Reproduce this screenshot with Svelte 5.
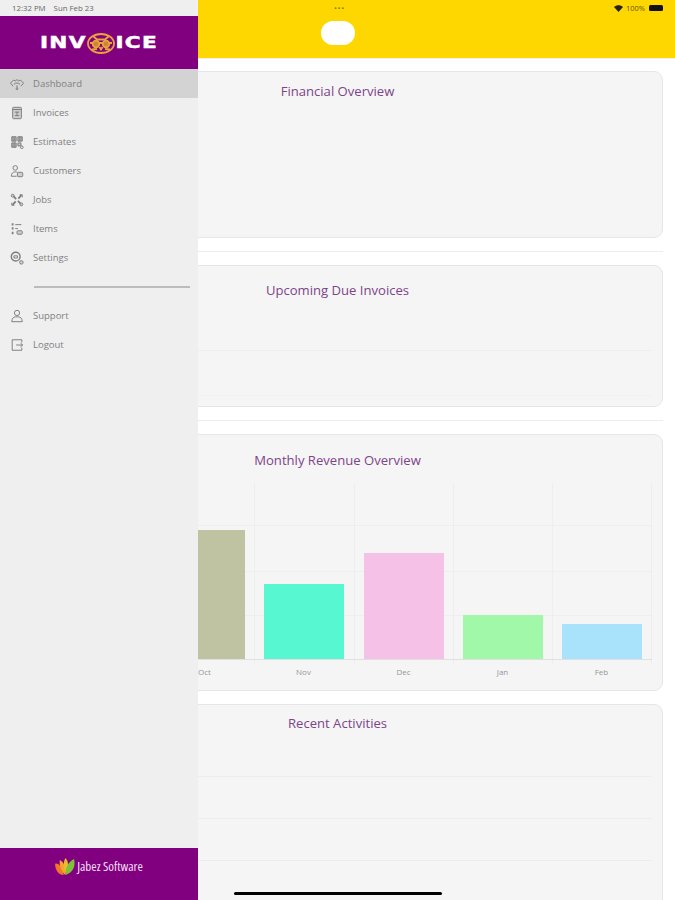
<script lang="ts">
  const navTop = [
    { label: "Dashboard", icon: "dashboard", active: true },
    { label: "Invoices", icon: "invoices" },
    { label: "Estimates", icon: "estimates" },
    { label: "Customers", icon: "customers" },
    { label: "Jobs", icon: "jobs" },
    { label: "Items", icon: "items" },
    { label: "Settings", icon: "settings" },
  ];
  const navBottom = [
    { label: "Support", icon: "support" },
    { label: "Logout", icon: "logout" },
  ];

  // page coordinates, the svg viewBox starts at the chart's top left
  const bars = [
    { month: "Oct", x: 165, top: 530, color: "#bfc3a1" },
    { month: "Nov", x: 264, top: 584, color: "#57f7d2" },
    { month: "Dec", x: 364, top: 553, color: "#f6c1e6" },
    { month: "Jan", x: 463, top: 615, color: "#a2f8a9" },
    { month: "Feb", x: 562, top: 624, color: "#a9e3fb" },
  ];
  const baseline = 659;
  const gridX = [155, 254, 354, 453, 552, 651];
  const gridY = [525, 571, 615];
</script>

{#snippet navIcon(name: string)}
  <svg class="nav-icon" viewBox="0 0 16 16" aria-hidden="true">
    {#if name === "dashboard"}
      <path d="M.5 7 4 3.500l2 1 2-1.500 2 1.500 2-1 3.500 3.500-3 3.500M3.500 10.500.5 7" />
      <path d="M4.500 8.500a4.500 4.500 0 0 1 7 0M8 9.500v3" />
      <circle cx="8" cy="13.500" r="1" />
    {:else if name === "invoices"}
      <rect x="3" y="1.500" width="10" height="13" rx="1" class="tint" />
      <path d="M3 4h10M8 6.500v5M5.500 7h5M5.500 11h5" />
    {:else if name === "estimates"}
      <path class="dense" d="M2 2h5v5H2zM9 2h5v5H9zM2 9h5v5H2zM9 9h3.500v3.500H9z" />
      <path d="M3.500 2v5M5.500 2v5M10.500 2v5M12.500 2v5M3.500 9v5M5.500 9v5" />
      <circle cx="13.500" cy="14" r="1.500" />
    {:else if name === "customers"}
      <circle cx="6" cy="4.500" r="2.600" />
      <path d="M1.500 14c0-3.500 2-5 4.500-5 1 0 1.800.2 2.400.6M1.500 14h6" />
      <rect x="8.500" y="9.500" width="6" height="5" rx="1" class="tint" />
    {:else if name === "jobs"}
      <path class="thick" d="M3 2.500 7 7M13 2.500 9.500 6.500M3 13.500 6.500 9.500M9 9l4.500 4.500" />
      <circle cx="3" cy="3" r="1.600" class="tint" />
      <circle cx="13" cy="13" r="1.600" class="tint" />
      <path d="M11 2h3v3M2 11v3h3" />
    {:else if name === "items"}
      <path class="thick" d="M3 1.500v2.500M3 6v2.500M3 11v3" />
      <path d="M6 3h7M6 7.500h3" />
      <rect x="8" y="10" width="6" height="4" rx="1" class="tint" />
    {:else if name === "settings"}
      <circle cx="6.500" cy="6.500" r="5" class="ring" />
      <path d="M4.500 5.500h4v2.500h-4z" />
      <circle cx="13" cy="13" r="2" class="tint" />
    {:else if name === "support"}
      <circle cx="8" cy="4.500" r="3" />
      <path d="M2 14.500c0-3.500 2-5.500 4-5.500h4c2 0 4 2 4 5.500z" />
    {:else if name === "logout"}
      <path d="M13.500 5V2H2.500v12h11v-3" />
      <path d="M7 8h7.500M12 5.800 14.500 8 12 10.200" />
    {/if}
  </svg>
{/snippet}

{#snippet owl()}
  <svg class="owl" viewBox="0 0 28 21" aria-hidden="true">
    <ellipse cx="14" cy="10.500" rx="13" ry="9.500" />
    <path d="M6 3 10 6.500h8L22 3M3 10h22" />
    <circle class="eye" cx="9" cy="11" r="3.300" />
    <circle class="eye" cx="19" cy="11" r="3.300" />
    <path d="M12.500 14 14 16.500 15.500 14M5 16.500l5-.5M23 16.500l-5-.5" />
  </svg>
{/snippet}

<div class="screen">
  <main class="page">
    <header class="topbar">
      <span class="pill"></span>
    </header>

    <div class="content">
      <section class="card overview">
        <h2>Financial Overview</h2>
      </section>
      <hr />
      <section class="card due">
        <h2>Upcoming Due Invoices</h2>
        <div class="rows">
          <div class="row"></div>
          <div class="row"></div>
        </div>
      </section>
      <hr />
      <section class="card revenue">
        <h2>Monthly Revenue Overview</h2>
        <svg class="chart" viewBox="13 476 649 214" aria-label="Monthly revenue bar chart">
          {#each gridX as x}
            <line class="grid" x1={x} x2={x} y1="483" y2="665" />
          {/each}
          {#each gridY as y}
            <line class="grid" x1="155" x2="652" y1={y} y2={y} />
          {/each}
          {#each bars as bar}
            <rect x={bar.x} y={bar.top} width="79.500" height={baseline - bar.top} fill={bar.color} />
            <text x={bar.x + 39.500} y="675">{bar.month}</text>
          {/each}
          <line class="axis" x1="155" x2="652" y1={baseline} y2={baseline} />
        </svg>
      </section>
      <section class="card activities">
        <h2>Recent Activities</h2>
        <div class="activity"></div>
        <div class="activity"></div>
        <div class="activity"></div>
      </section>
    </div>
  </main>

  <div class="statusbar">
    <span class="dots">•••</span>
    <span class="status-right">
      <svg class="wifi" viewBox="0 0 12 9" aria-hidden="true"><path d="M0 2.600C3.400-.6 8.600-.6 12 2.600L6 9z" /></svg>
      <span>100%</span>
      <span class="battery"></span>
    </span>
  </div>

  <aside class="drawer">
    <div class="drawer-status">
      <span>12:32 PM</span>
      <span>Sun Feb 23</span>
    </div>
    <div class="brand">
      <span class="brand-word">INV</span>
      {@render owl()}
      <span class="brand-word">ICE</span>
    </div>
    <nav class="nav">
      {#each navTop as item}
        <div class="nav-item" class:active={item.active}>
          {@render navIcon(item.icon)}
          <span>{item.label}</span>
        </div>
      {/each}
      <div class="nav-divider"></div>
      {#each navBottom as item}
        <div class="nav-item">
          {@render navIcon(item.icon)}
          <span>{item.label}</span>
        </div>
      {/each}
    </nav>
    <footer class="drawer-footer">
      <svg class="leaf" viewBox="0 0 22 18" aria-hidden="true">
        <path fill="#f2762b" d="M0 6c4-1 8 4 9 12C4 18 0 13 0 6z" />
        <path fill="#f7a52a" d="M5 2c4 2 7 8 6 16C7 15 4 8 5 2z" />
        <path fill="#e9b92e" d="M11 0c3 3 4 9 1 17-3-5-4-12-1-17z" />
        <path fill="#7cc23a" d="M20 1c2 8-1 14-9 17 0-8 3-14 9-17z" />
      </svg>
      <span>Jabez Software</span>
    </footer>
  </aside>

  <div class="home-indicator"></div>
</div>

<style>
  :global(body) {
    margin: 0;
    background: #fff;
  }

  .screen {
    position: relative;
    width: 675px;
    height: 900px;
    overflow: hidden;
    font-family: "Open Sans", "Liberation Sans", sans-serif;
  }

  .page {
    display: flex;
    flex-direction: column;
  }

  .topbar {
    height: 58px;
    background: #ffd700;
    display: flex;
    justify-content: center;
    padding-top: 21px;
    box-sizing: border-box;
    box-shadow: 0 1px 1px rgba(0, 0, 0, 0.06);
  }

  .pill {
    width: 34px;
    height: 24px;
    border-radius: 12px;
    background: #fff;
  }

  .content {
    padding: 13px 12px 0;
    display: flex;
    flex-direction: column;
  }

  hr {
    border: 0;
    height: 1px;
    background: #ececec;
    margin: 13px 0;
    width: 100%;
  }

  .card {
    box-sizing: border-box;
    background: #f5f5f6;
    border: 1px solid #e6e6e8;
    border-radius: 9px;
    padding: 10px 10px 0;
  }

  .card h2 {
    margin: 0;
    font-size: 13.100px;
    line-height: 18px;
    font-weight: 400;
    color: #7d4488;
    text-align: center;
  }

  .overview {
    height: 167px;
  }

  .due {
    height: 142px;
    padding-top: 15px;
  }

  .rows {
    margin-top: 51px;
  }

  .row {
    height: 44px;
    border-top: 1px solid #eeeeef;
  }

  .row + .row {
    height: 1px;
    border-top: 0;
    background: #f1f1f2;
  }

  .revenue {
    height: 257px;
    padding: 16px 0 0;
    margin-bottom: 13px;
  }

  .chart {
    display: block;
    width: 649px;
    height: 214px;
    margin-top: 7px;
    shape-rendering: crispEdges;
  }

  .chart .grid {
    stroke: #eeeeef;
    stroke-width: 1;
  }

  .chart .axis {
    stroke: #e0e0e2;
    stroke-width: 1;
  }

  .chart text {
    font-size: 8px;
    fill: #969696;
    text-anchor: middle;
  }

  .activities {
    height: 240px;
    padding-top: 9px;
  }

  .activity {
    height: 41px;
    border-bottom: 1px solid #ededee;
  }

  .activity:first-of-type {
    height: 44px;
  }

  .statusbar {
    position: absolute;
    top: 0;
    left: 198px;
    right: 0;
    height: 16px;
    font-size: 7.500px;
    color: #5f5410;
  }

  .dots {
    position: absolute;
    left: 136px;
    top: 2px;
    letter-spacing: 0.6px;
    font-size: 8px;
    color: #8a7a10;
  }

  .status-right {
    position: absolute;
    right: 12px;
    top: 3px;
    display: flex;
    align-items: center;
    gap: 3px;
    line-height: 10px;
  }

  .wifi {
    width: 9px;
    height: 7px;
    fill: #222;
  }

  .battery {
    width: 14px;
    height: 6px;
    background: #111;
    border-radius: 1.500px;
    margin-left: 1px;
  }

  .drawer {
    position: absolute;
    top: 0;
    left: 0;
    bottom: 0;
    width: 198px;
    background: #f0eff0;
    display: flex;
    flex-direction: column;
  }

  .drawer-status {
    height: 16px;
    display: flex;
    gap: 8px;
    padding-left: 12px;
    font-size: 7.800px;
    line-height: 16px;
    color: #666;
  }

  .brand {
    height: 53px;
    background: #800080;
    display: flex;
    align-items: center;
    justify-content: center;
    padding-top: 1px;
    box-sizing: border-box;
  }

  .brand-word {
    display: inline-block;
    margin: 0 6px;
    font-family: "DejaVu Sans", sans-serif;
    font-weight: 700;
    font-size: 16px;
    letter-spacing: 1px;
    color: #fff;
    line-height: 1;
    -webkit-text-stroke: 0.5px #fff;
    transform: scaleX(1.35);
  }

  .owl {
    width: 28px;
    height: 21px;
    margin: 0;
    fill: none;
    stroke: #e8a33a;
    stroke-width: 1.800;
  }

  .owl .eye {
    fill: #c9863a;
  }

  .nav {
    flex: 1;
    display: flex;
    flex-direction: column;
  }

  .nav-item {
    height: 29px;
    flex: none;
    display: flex;
    align-items: center;
    gap: 9px;
    padding-left: 10px;
    font-size: 9.500px;
    color: #7f7f7f;
  }

  .nav-item.active {
    background: #d4d3d4;
  }

  .nav-icon {
    width: 14px;
    height: 14px;
    fill: none;
    stroke: #7d7d7d;
    stroke-width: 1.100;
  }

  .nav-icon .tint {
    fill: #cfcfcf;
  }

  .nav-icon .dense {
    fill: #c4c4c4;
  }

  .nav-icon .thick {
    stroke-width: 2;
  }

  .nav-icon .ring {
    stroke-width: 1.600;
  }

  .nav-divider {
    height: 2px;
    background: #bdbcbd;
    margin: 14px 8px 13px 34px;
    flex: none;
  }

  .drawer-footer {
    height: 52px;
    background: #800080;
    display: flex;
    align-items: center;
    justify-content: center;
    gap: 1px;
    padding-bottom: 16px;
    box-sizing: border-box;
    color: #f3dff3;
    font-size: 13px;
    font-stretch: condensed;
  }

  .leaf {
    width: 21px;
    height: 17px;
  }

  .home-indicator {
    position: absolute;
    left: 234px;
    bottom: 5px;
    width: 208px;
    height: 3px;
    border-radius: 2px;
    background: #000;
  }
</style>
